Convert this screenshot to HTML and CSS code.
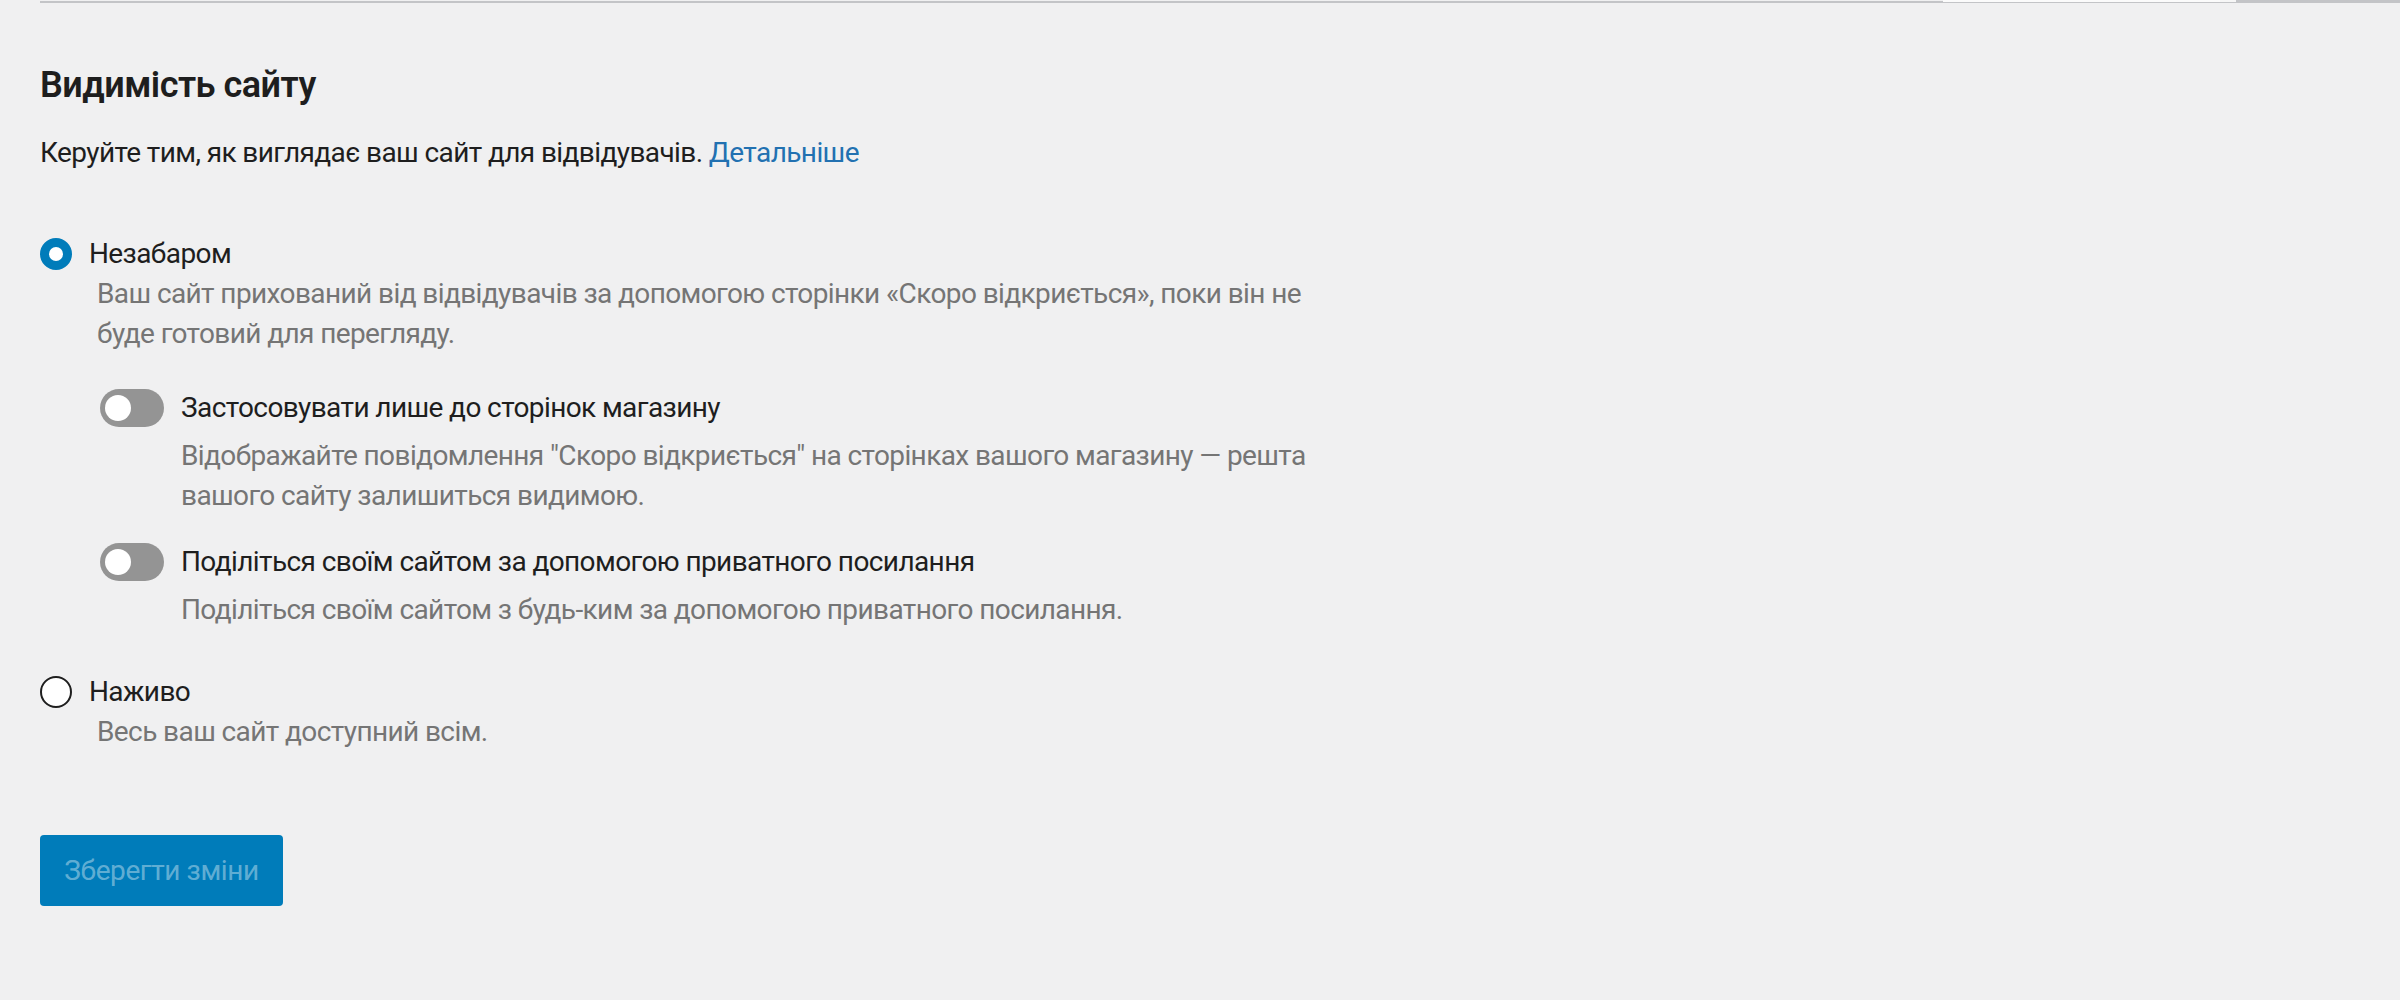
FILE: index.html
```html
<!DOCTYPE html>
<html lang="uk">
<head>
<meta charset="utf-8">
<title>Видимість сайту</title>
<link rel="stylesheet" href="styles.css">
</head>
<body>
<div class="topbar">
  <div class="seg seg-a"></div>
  <div class="seg seg-b"></div>
  <div class="seg seg-c"></div>
  <div class="seg seg-d"></div>
</div>
<main class="settings">
  <h2 class="title">Видимість сайту</h2>
  <p class="intro">Керуйте тим, як виглядає ваш сайт для відвідувачів. <a href="#" class="link">Детальніше</a></p>

  <div class="options">
    <div class="option">
      <label class="radio-row">
        <span class="radio radio-checked"></span>
        <span class="label">Незабаром</span>
      </label>
      <p class="help help-radio">Ваш сайт прихований від відвідувачів за допомогою сторінки «Скоро відкриється», поки він не буде готовий для перегляду.</p>

      <div class="toggles">
        <div class="toggle-option">
          <label class="toggle-row">
            <span class="toggle"><span class="knob"></span></span>
            <span class="label">Застосовувати лише до сторінок магазину</span>
          </label>
          <p class="help help-toggle">Відображайте повідомлення "Скоро відкриється" на сторінках вашого магазину — решта вашого сайту залишиться видимою.</p>
        </div>
        <div class="toggle-option">
          <label class="toggle-row">
            <span class="toggle"><span class="knob"></span></span>
            <span class="label">Поділіться своїм сайтом за допомогою приватного посилання</span>
          </label>
          <p class="help help-toggle">Поділіться своїм сайтом з будь-ким за допомогою приватного посилання.</p>
        </div>
      </div>
    </div>

    <div class="option option-live">
      <label class="radio-row">
        <span class="radio"></span>
        <span class="label">Наживо</span>
      </label>
      <p class="help help-radio">Весь ваш сайт доступний всім.</p>
    </div>
  </div>

  <button class="save" type="button" disabled>Зберегти зміни</button>
</main>
</body>
</html>
```

FILE: styles.css
```css
* { box-sizing: border-box; }

html, body {
  margin: 0;
  padding: 0;
  background: #f0f0f1;
}

body {
  font-family: Roboto, "Noto Sans", "DejaVu Sans", sans-serif;
  color: #1e1e1e;
  font-size: 28px;
  line-height: 40px;
  letter-spacing: -0.6px;
}

.topbar {
  display: flex;
  align-items: flex-start;
  height: 3px;
  margin-left: 40px;
}

.seg { height: 2px; }
.seg-a { flex: 1; background: #c3c4c7; margin-top: 1px; }
.seg-b { width: 277px; height: 3px; background: #fbfbfb; border-bottom: 1px solid #c3c4c7; }
.seg-c { width: 16px; height: 3px; background: #f6f6f6; border-bottom: 1px solid #c3c4c7; }
.seg-d { width: 164px; height: 3px; background: #c3c4c7; }

.settings {
  padding: 0 40px 60px;
}

.title {
  margin: 58px 0 0;
  font-size: 36px;
  line-height: 48px;
  font-weight: 600;
  letter-spacing: -0.5px;
  color: #1e1e1e;
}

.intro {
  margin: 24px 0 0;
}

.link {
  color: #2271b1;
  text-decoration: none;
}

.options {
  margin-top: 61px;
  display: flex;
  flex-direction: column;
  gap: 42px;
}

.radio-row,
.toggle-row {
  display: flex;
  align-items: center;
  gap: 17px;
}

.radio {
  flex: none;
  width: 32px;
  height: 32px;
  border-radius: 50%;
  border: 2px solid #1e1e1e;
  background: #fff;
  display: flex;
  align-items: center;
  justify-content: center;
}

.radio-checked {
  border-color: #007cba;
  background: #007cba;
}

.radio-checked::after {
  content: "";
  width: 14px;
  height: 14px;
  border-radius: 50%;
  background: #fff;
}

.help {
  margin: 0;
  color: #757575;
}

.help-radio {
  padding-left: 57px;
  max-width: 1320px;
}

.toggles {
  margin-top: 34px;
  padding-left: 60px;
  display: flex;
  flex-direction: column;
  gap: 26px;
}

.toggle-row {
  height: 40px;
}

.toggle {
  flex: none;
  width: 64px;
  height: 38px;
  border-radius: 19px;
  background: #949494;
  display: flex;
  align-items: center;
  padding-left: 5px;
}

.knob {
  width: 26px;
  height: 26px;
  border-radius: 50%;
  background: #fff;
}

.help-toggle {
  margin-top: 8px;
  padding-left: 81px;
  max-width: 1270px;
}

.save {
  margin-top: 83px;
  width: 243px;
  height: 71px;
  border: 0;
  border-radius: 4px;
  background: #007cba;
  color: rgba(255, 255, 255, 0.4);
  font-family: inherit;
  font-size: 28px;
  letter-spacing: -0.4px;
  padding: 0;
  cursor: default;
}
```
